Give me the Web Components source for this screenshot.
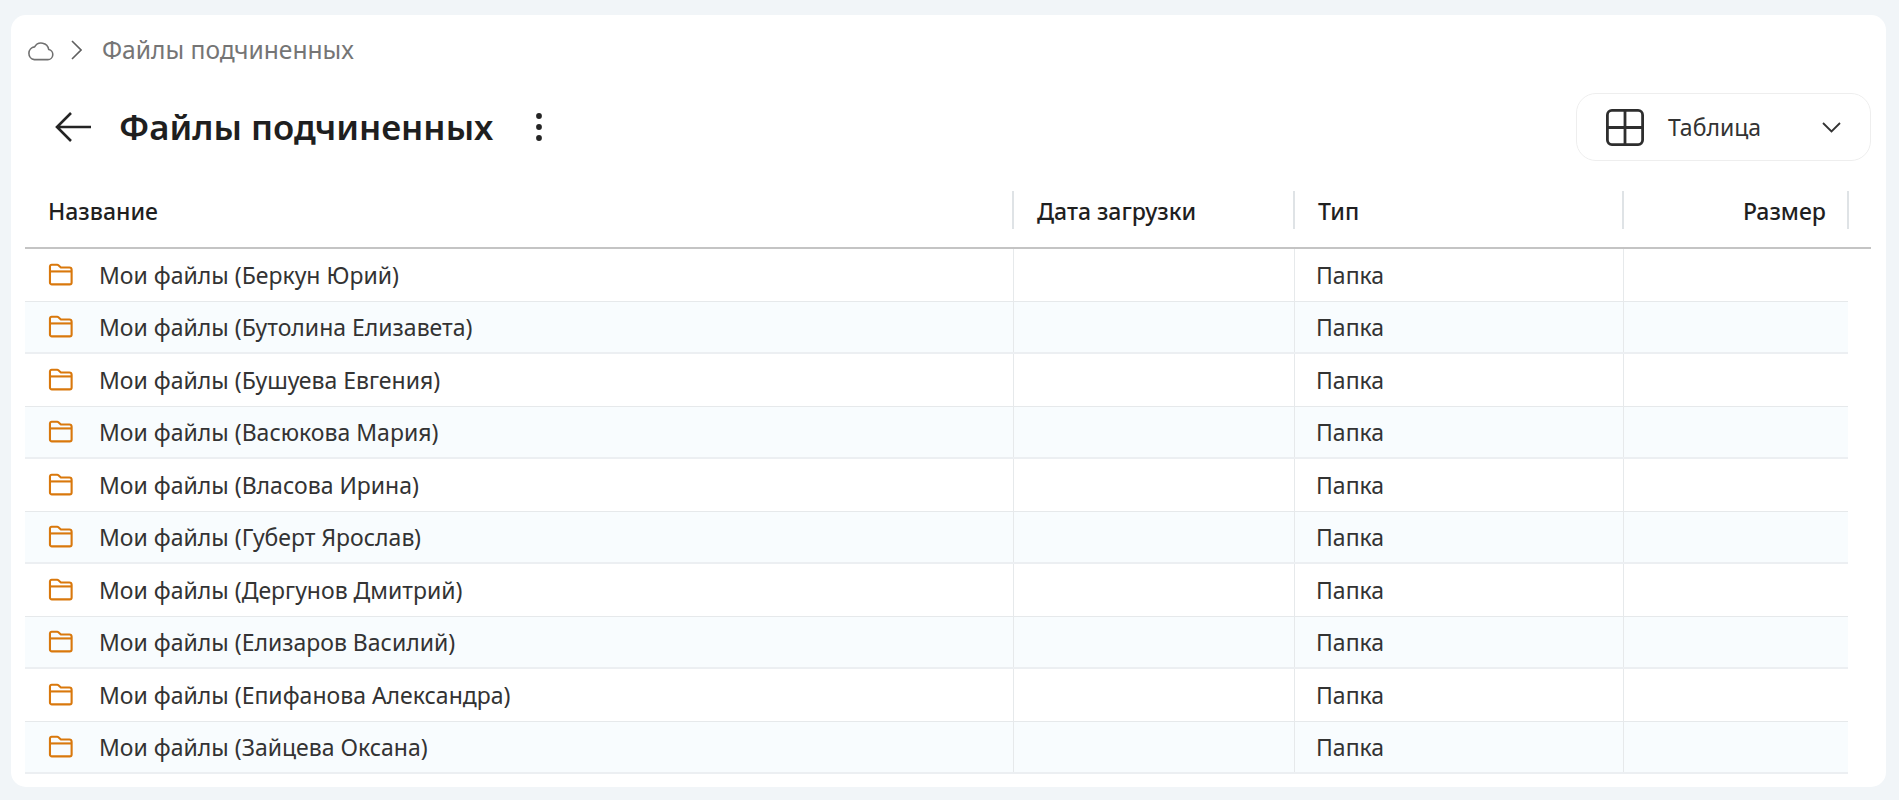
<!DOCTYPE html>
<html lang="ru">
<head>
<meta charset="utf-8">
<title>Файлы подчиненных</title>
<style>
    html, body { margin: 0; height: 100%; overflow: hidden; }
    body {
        background: #f1f5f8;
        font-family: "Noto Sans", "Open Sans", sans-serif;
        color: #242424;
    }
</style>
</head>
<body>
<files-page>
    <page-breadcrumb slot="crumbs" label="Файлы подчиненных"></page-breadcrumb>
    <page-title slot="title" label="Файлы подчиненных"></page-title>
    <view-select slot="view" label="Таблица"></view-select>
    <files-table slot="table"></files-table>
</files-page>

<script>
class FilesPage extends HTMLElement {
    connectedCallback() {
        this.attachShadow({ mode: 'open' });
        this.shadowRoot.innerHTML = `
            <style>
                :host {
                    display: block;
                    box-sizing: border-box;
                    height: 800px;
                    padding: 15px 13px 13px 11px;
                }
                .card {
                    box-sizing: border-box;
                    height: 100%;
                    background: #fff;
                    border-radius: 15px;
                    padding: 0 15px 0 14px;
                    overflow: hidden;
                }
                .top {
                    display: flex;
                    align-items: flex-start;
                    justify-content: space-between;
                    height: 78px;
                }
            </style>
            <div class="card">
                <slot name="crumbs"></slot>
                <div class="top">
                    <slot name="title"></slot>
                    <slot name="view"></slot>
                </div>
                <slot name="table"></slot>
            </div>
        `;
    }
}

class PageBreadcrumb extends HTMLElement {
    connectedCallback() {
        const label = this.getAttribute('label') || '';
        this.attachShadow({ mode: 'open' });
        this.shadowRoot.innerHTML = `
            <style>
                :host {
                    display: flex;
                    align-items: center;
                    height: 78px;
                    padding: 0 0 9px 3px;
                    box-sizing: border-box;
                    color: #757575;
                    font-size: 24.6px;
                }
                svg { display: block; flex: none; }
                .chev { margin: 0 20px 0 17px; }
            </style>
            <svg width="26" height="22" viewBox="0 0 26 22" fill="none" stroke="#707070" stroke-width="1.6" stroke-linejoin="round">
                <path d="M6.4 20.6h13.4a5.1 5.1 0 0 0 .9-10.1A7.6 7.6 0 0 0 6.6 7.9a6.4 6.4 0 0 0-.2 12.7z"/>
            </svg>
            <svg class="chev" width="11" height="20" viewBox="0 0 11 20" fill="none" stroke="#606060" stroke-width="1.6">
                <path d="M1 1l9 9-9 9"/>
            </svg>
            <span>${label}</span>
        `;
    }
}

class PageTitle extends HTMLElement {
    connectedCallback() {
        const label = this.getAttribute('label') || '';
        this.attachShadow({ mode: 'open' });
        this.shadowRoot.innerHTML = `
            <style>
                :host {
                    display: flex;
                    align-items: center;
                    height: 36px;
                    margin-top: 16px;
                    padding-left: 30px;
                }
                svg { display: block; flex: none; }
                h1 {
                    margin: 0 0 0 28px;
                    font-size: 34.8px;
                    font-weight: 600;
                    line-height: 36px;
                    color: #1f1f1f;
                }
                .more { margin-left: 40px; }
            </style>
            <svg width="36" height="30" viewBox="0 0 36 30" fill="none" stroke="#242424" stroke-width="2.6">
                <path d="M16 1L2 15l14 14M2.5 15H36"/>
            </svg>
            <h1>${label}</h1>
            <svg class="more" width="12" height="30" viewBox="0 0 12 30" fill="#242424">
                <circle cx="6" cy="4" r="2.9"/>
                <circle cx="6" cy="15" r="2.9"/>
                <circle cx="6" cy="26" r="2.9"/>
            </svg>
        `;
    }
}

class ViewSelect extends HTMLElement {
    connectedCallback() {
        const label = this.getAttribute('label') || '';
        this.attachShadow({ mode: 'open' });
        this.shadowRoot.innerHTML = `
            <style>
                :host {
                    display: flex;
                    align-items: center;
                    box-sizing: border-box;
                    width: 295px;
                    height: 68px;
                    border: 1px solid #eeeeee;
                    border-radius: 20px;
                    padding: 0 29px 0 29px;
                    font-size: 23px;
                    color: #333;
                }
                svg { display: block; flex: none; }
                span { margin-left: 24px; flex: 1; }
            </style>
            <svg width="38" height="37" viewBox="0 0 38 37" fill="none" stroke="#2e2e2e" stroke-width="2.8">
                <rect x="1.4" y="1.4" width="35.2" height="34.2" rx="4.5"/>
                <path d="M19 1v35M1 18.5h36"/>
            </svg>
            <span>${label}</span>
            <svg width="19" height="11" viewBox="0 0 19 11" fill="none" stroke="#333" stroke-width="1.8">
                <path d="M1 1l8.5 8.5L18 1"/>
            </svg>
        `;
    }
}

class FilesTable extends HTMLElement {
    connectedCallback() {
        const names = [
            'Беркун Юрий', 'Бутолина Елизавета', 'Бушуева Евгения', 'Васюкова Мария',
            'Власова Ирина', 'Губерт Ярослав', 'Дергунов Дмитрий', 'Елизаров Василий',
            'Епифанова Александра', 'Зайцева Оксана'
        ];
        this.attachShadow({ mode: 'open' });
        this.shadowRoot.innerHTML = `
            <style>
                :host { display: block; }
                .head {
                    display: grid;
                    grid-template-columns: 989px 281px 329px 225px;
                    align-items: center;
                    height: 78px;
                    box-sizing: border-box;
                    border-bottom: 2px solid #c4c4c4;
                    font-size: 23px;
                    font-weight: 500;
                    color: #1f1f1f;
                }
                .head div {
                    box-sizing: border-box;
                    height: 38px;
                    margin-top: 1px;
                    line-height: 38px;
                    padding: 1px 21px 0 23px;
                    border-right: 2px solid #dfe3e6;
                }
                .head .right { text-align: right; }
                .rows { width: 1823px; }
            </style>
            <div class="head">
                <div>Название</div>
                <div>Дата загрузки</div>
                <div>Тип</div>
                <div class="right">Размер</div>
            </div>
            <div class="rows">
                ${names.map((n, i) => `<file-row name="Мои файлы (${n})" type="Папка"${i % 2 ? ' striped' : ''}></file-row>`).join('')}
            </div>
        `;
    }
}

class FileRow extends HTMLElement {
    connectedCallback() {
        const name = this.getAttribute('name') || '';
        const type = this.getAttribute('type') || '';
        this.attachShadow({ mode: 'open' });
        this.shadowRoot.innerHTML = `
            <style>
                :host {
                    display: grid;
                    grid-template-columns: 989px 281px 329px 224px;
                    box-sizing: border-box;
                    height: 52.5px;
                    border-bottom: 1px solid #e6e9eb;
                    font-size: 23px;
                    color: #333;
                }
                :host([striped]) {
                    background: #f8fcfe;
                    border-bottom: 2px solid #eceff2;
                }
                .cell {
                    box-sizing: border-box;
                    display: flex;
                    align-items: center;
                    border-right: 1px solid #e6e9eb;
                    min-width: 0;
                }
                .cell:last-child { border-right: 0; }
                .name { padding-left: 23px; }
                .name svg { display: block; flex: none; margin-right: 26px; }
                .type { padding-left: 21px; }
            </style>
            <div class="cell name">
                <svg width="25" height="23" viewBox="0 0 26 24" fill="none" stroke="#d9780c" stroke-width="2.2" stroke-linejoin="round">
                    <path d="M2 6.5V3.6A1.8 1.8 0 0 1 3.8 1.8h5.7a2 2 0 0 1 1.3.5l2.6 2.4h8.8a2.4 2.4 0 0 1 2.4 2.4v13.2a2 2 0 0 1-2 2H4a2 2 0 0 1-2-2z"/>
                    <path d="M2 8.8h22.6"/>
                </svg>
                <span>${name}</span>
            </div>
            <div class="cell"></div>
            <div class="cell type">${type}</div>
            <div class="cell"></div>
        `;
    }
}

customElements.define('files-page', FilesPage);
customElements.define('page-breadcrumb', PageBreadcrumb);
customElements.define('page-title', PageTitle);
customElements.define('view-select', ViewSelect);
customElements.define('files-table', FilesTable);
customElements.define('file-row', FileRow);
</script>
</body>
</html>
